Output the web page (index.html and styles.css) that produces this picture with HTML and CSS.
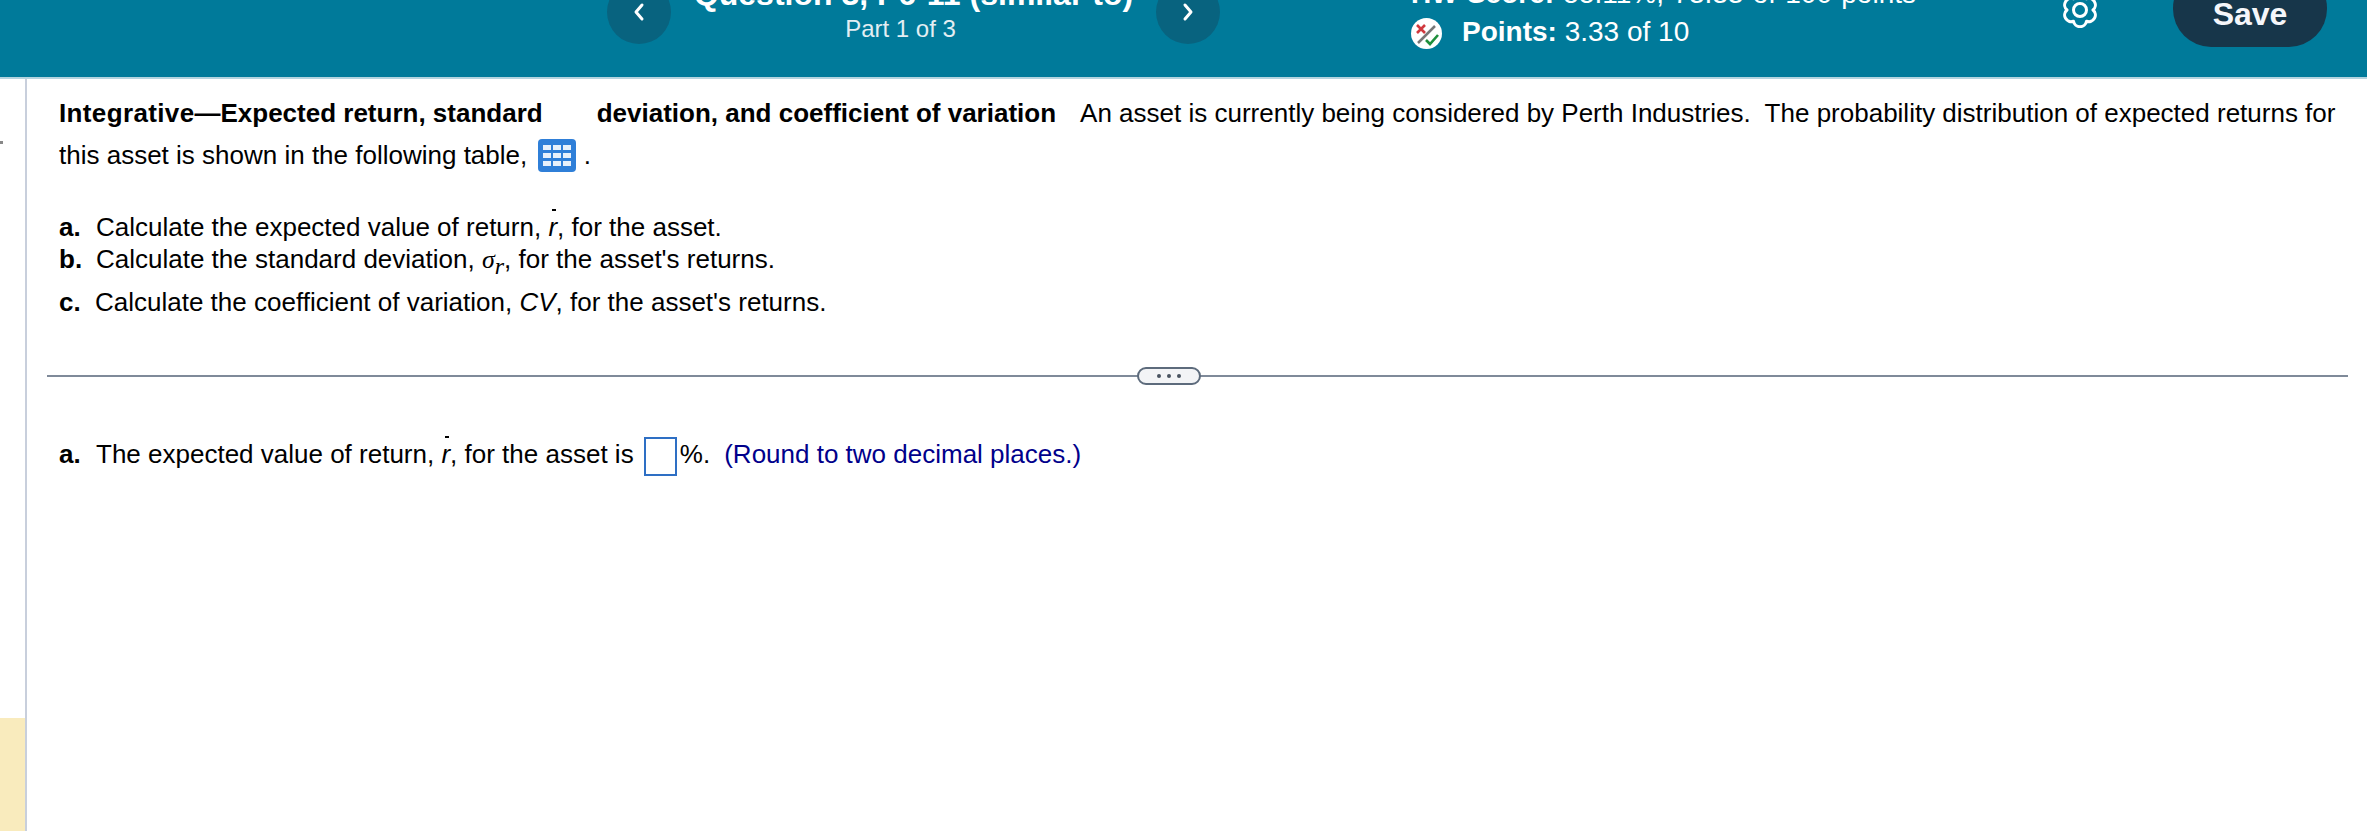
FILE: index.html
```html
<!DOCTYPE html>
<html lang="en">
<head>
<meta charset="utf-8">
<title>Question 3, P6-11 (similar to)</title>
<link rel="stylesheet" href="styles.css">
</head>
<body>
<header class="topbar">
  <div class="nav-group">
    <button class="nav-btn" aria-label="Previous">
      <svg width="12" height="20" viewBox="0 0 12 20"><path d="M9 3 3 10l6 7" class="chev"/></svg>
    </button>
    <div class="title-block">
      <div class="title">Question 3, P6-11 (similar to)</div>
      <div class="part">Part 1 of 3</div>
    </div>
    <button class="nav-btn" aria-label="Next">
      <svg width="12" height="20" viewBox="0 0 12 20"><path d="M3 3l6 7-6 7" class="chev"/></svg>
    </button>
  </div>
  <div class="score-block">
    <div class="hw"><b>HW Score:</b> 55.11%, 73.33 of 100 points</div>
    <div class="points">
      <svg class="pts-icon" width="31" height="31" viewBox="0 0 31 31">
        <circle cx="15.5" cy="15.5" r="15.5" fill="#fff"/>
        <path d="M7 25 24 8" stroke="#777" stroke-width="2.5"/>
        <path d="M6 7l8 8M14 7l-8 8" stroke="#d0393e" stroke-width="2.6"/>
        <path d="M15 22l4 4 8-9" stroke="#1f8f3c" stroke-width="2.6" fill="none"/>
      </svg>
      <span class="points-text"><b>Points:</b> 3.33 of 10</span>
    </div>
  </div>
  <svg class="gear" width="36" height="36" viewBox="0 0 36 36">
    <circle cx="18" cy="18" r="6.5" class="gear-line"/>
    <path class="gear-line" d="M24.5 6.74A6.6 6.6 0 0 1 31 18A6.6 6.6 0 0 1 24.5 29.26A6.6 6.6 0 0 1 11.5 29.26A6.6 6.6 0 0 1 5 18A6.6 6.6 0 0 1 11.5 6.74A6.6 6.6 0 0 1 24.5 6.74Z" stroke-linejoin="round"/>
  </svg>
  <button class="save">Save</button>
</header>

<div class="page">
  <aside class="rail"><span class="rail-mark"></span><span class="rail-note"></span></aside>
  <main class="content">
    <p class="intro"><b><span class="lead">Integrative</span>—Expected return, standard<span class="gap"></span>deviation, and coefficient of variation</b><span class="gap-sm"></span>An asset is currently being considered by Perth Industries.&nbsp; The probability distribution of expected returns for this asset is shown in the following table,
      <svg class="table-icon" width="38" height="33" viewBox="0 0 38 33">
        <rect width="38" height="33" rx="4" fill="#2f7fd8"/>
        <g fill="#e8f1fb">
          <rect x="5" y="6" width="8" height="5"/><rect x="15" y="6" width="8" height="5"/><rect x="25" y="6" width="8" height="5"/>
          <rect x="5" y="14" width="8" height="5"/><rect x="15" y="14" width="8" height="5"/><rect x="25" y="14" width="8" height="5"/>
          <rect x="5" y="22" width="8" height="5"/><rect x="15" y="22" width="8" height="5"/><rect x="25" y="22" width="8" height="5"/>
        </g>
      </svg> .</p>
    <ol class="tasks">
      <li class="task-a"><b class="mark">a.</b>Calculate the expected value of return, <i class="rbar">r</i>, for the asset.</li>
      <li class="task-b"><b class="mark">b.</b>Calculate the standard deviation, <i class="sigma">σ<sub>r</sub></i>, for the asset's returns.</li>
      <li class="task-c"><b class="mark mark-c">c.</b>Calculate the coefficient of variation, <i>CV</i>, for the asset's returns.</li>
    </ol>
    <div class="divider"><button class="more" aria-label="More"><span></span><span></span><span></span></button></div>
    <p class="answer"><b class="mark">a.</b>The expected value of return, <i class="rbar">r</i>, for the asset is <span class="input"></span><span class="pct">%.</span><span class="hint">(Round to two decimal places.)</span></p>
  </main>
</div>
</body>
</html>
```
FILE: styles.css
```css
* { box-sizing: border-box; }
html, body { margin: 0; padding: 0; height: 831px; overflow: hidden; background: #fff; }
body { font-family: "Liberation Sans", Arial, sans-serif; color: #000; font-size: 26px; }
button { font-family: inherit; border: 0; padding: 0; }

.topbar { height: 79px; background: #007a9a; border-bottom: 2px solid #b4d4df; display: flex; align-items: flex-start; color: #fff; }
.nav-group { display: flex; margin-left: 607px; margin-top: -20px; width: 613px; flex: none; justify-content: space-between; }
.nav-btn { width: 64px; height: 64px; border-radius: 50%; background: #08637f; display: flex; align-items: center; justify-content: center; }
.chev { fill: none; stroke: #fff; stroke-width: 3; stroke-linecap: round; stroke-linejoin: round; }
.title-block { text-align: center; margin-top: -3px; }
.title { font-size: 32px; font-weight: 700; line-height: 34px; white-space: nowrap; }
.part { font-size: 24px; line-height: 28px; margin-top: 4px; padding-right: 26px; color: #e3eef3; }

.score-block { margin-left: 191px; margin-top: -21px; width: 640px; flex: none; }
.hw { font-size: 28px; line-height: 30px; white-space: nowrap; word-spacing: 1.5px; }
.points { display: flex; align-items: center; gap: 20px; font-size: 28px; margin-top: 7px; }
.points-text { margin-bottom: 2px; }
.pts-icon { flex: none; }
.gear { margin-top: -8px; margin-left: 11px; flex: none; }
.gear-line { fill: none; stroke: #fff; stroke-width: 3; }
.save { width: 154px; height: 77px; margin-top: -30px; margin-left: 75px; border-radius: 38px; background: #17364a; color: #f5f6fa; font-size: 32px; font-weight: 700; padding-top: 11px; flex: none; }

.page { display: flex; height: 752px; }
.rail { width: 27px; border-right: 2px solid #c8cfdc; display: flex; flex-direction: column; justify-content: space-between; flex: none; }
.rail-mark { width: 3px; height: 3px; background: #888; margin-top: 62px; }
.rail-note { height: 113px; background: #f9ebbd; }
.content { flex: 1; padding: 0 19px 0 20px; }

.intro { margin: 13px 0 0 12px; line-height: 42px; }
.lead { letter-spacing: 0.36px; }
.gap { display: inline-block; width: 54px; }
.gap-sm { display: inline-block; width: 24px; }
.table-icon { vertical-align: -8px; margin-left: 4px; }
.tasks { list-style: none; margin: 35px 0 0 12px; padding: 0; }
.tasks li { white-space: nowrap; line-height: 32px; }
.task-c { margin-top: 10px; }
.mark { display: inline-block; width: 37px; }
.mark-c { width: 36px; }
.rbar { position: relative; }
.rbar::before { content: ""; position: absolute; left: 4px; top: -3px; width: 4px; height: 2px; background: #000; }
.sigma { font-family: "Liberation Serif", serif; }
.sigma sub { font-size: 24px; line-height: 0; vertical-align: -6px; }

.divider { margin-top: 57px; height: 2px; background: #7f8a99; display: flex; justify-content: center; align-items: center; }
.more { width: 64px; height: 18px; flex: none; border: 2px solid #5d6b7c; border-radius: 9px; background: #f3f4f6; display: flex; align-items: center; justify-content: center; gap: 6px; margin-left: -58px; }
.more span { width: 4px; height: 4px; border-radius: 50%; background: #4a5360; }

.answer { margin: 57px 0 0 12px; line-height: 40px; white-space: nowrap; }
.input { display: inline-block; width: 33px; height: 39px; border: 2px solid #2e6fc4; margin-left: 3px; background: #fff; vertical-align: middle; }
.pct { margin-left: 3px; }
.hint { color: #00008b; margin-left: 14px; }
```
